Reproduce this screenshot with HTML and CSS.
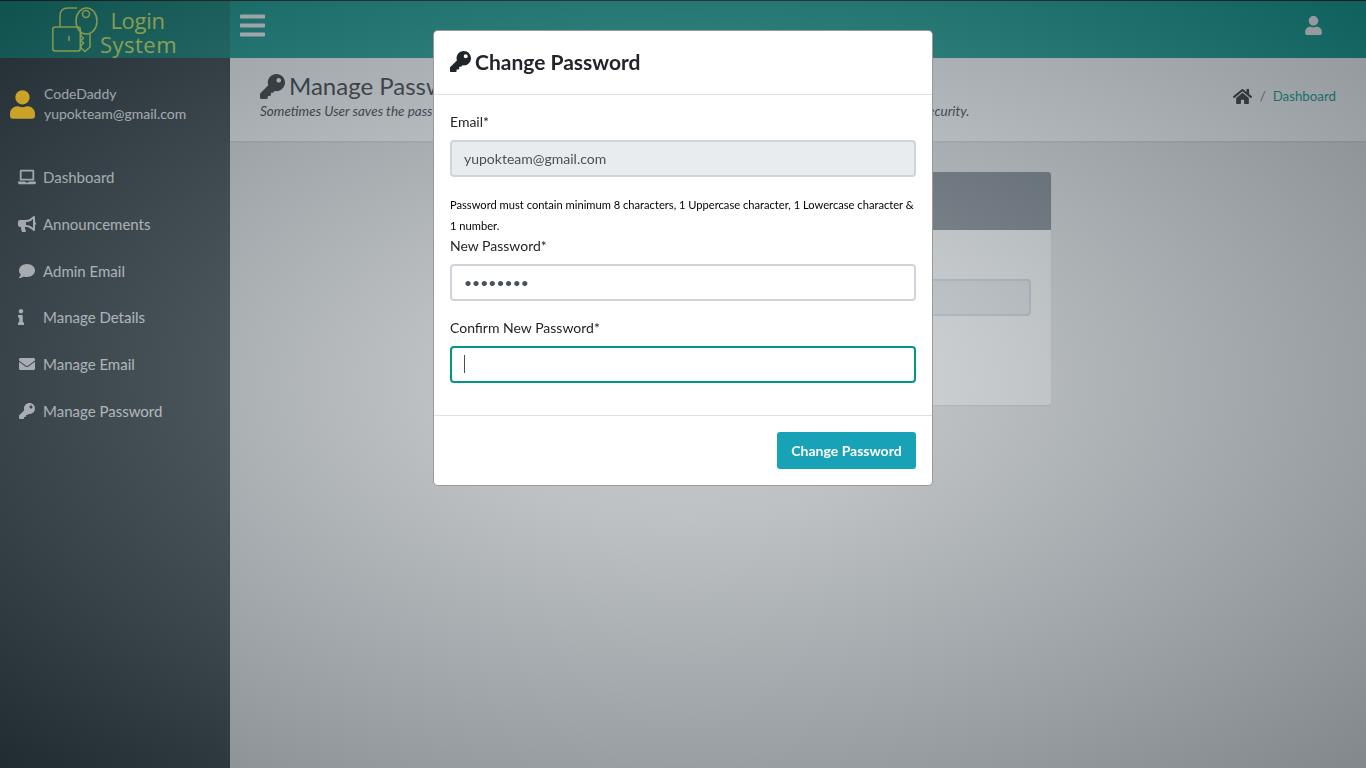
FILE: index.html
```html
<!DOCTYPE html>
<html lang="en">
<head>
<meta charset="utf-8">
<title>Change Password</title>
<link rel="stylesheet" href="styles.css">
</head>
<body>
<svg class="sprite" aria-hidden="true">
  <symbol id="i-key" viewBox="0 0 512 512"><path d="M512 176.001C512 273.203 433.202 352 336 352c-11.22 0-22.19-1.062-32.827-3.069l-24.012 27.014A23.999 23.999 0 0 1 261.223 384H224v40c0 13.255-10.745 24-24 24h-40v40c0 13.255-10.745 24-24 24H24c-13.255 0-24-10.745-24-24v-78.059c0-6.365 2.529-12.47 7.029-16.971l161.802-161.802C163.108 213.814 160 195.271 160 176 160 78.798 238.797.001 335.999 0 433.488-.001 512 78.511 512 176.001zM336 128c0 26.51 21.49 48 48 48s48-21.49 48-48-21.49-48-48-48-48 21.49-48 48z"/></symbol>
  <symbol id="i-user" viewBox="0 0 448 512"><path d="M224 256c70.7 0 128-57.3 128-128S294.7 0 224 0 96 57.3 96 128s57.3 128 128 128zm89.6 32h-16.7c-22.2 10.2-46.9 16-72.9 16s-50.6-5.8-72.9-16h-16.7C60.2 288 0 348.2 0 422.4V464c0 26.5 21.5 48 48 48h352c26.5 0 48-21.5 48-48v-41.6c0-74.2-60.2-134.4-134.4-134.4z"/></symbol>
  <symbol id="i-bars" viewBox="0 0 448 512"><path d="M16 132h416c8.837 0 16-7.163 16-16V76c0-8.837-7.163-16-16-16H16C7.163 60 0 67.163 0 76v40c0 8.837 7.163 16 16 16zm0 160h416c8.837 0 16-7.163 16-16v-40c0-8.837-7.163-16-16-16H16c-8.837 0-16 7.163-16 16v40c0 8.837 7.163 16 16 16zm0 160h416c8.837 0 16-7.163 16-16v-40c0-8.837-7.163-16-16-16H16c-8.837 0-16 7.163-16 16v40c0 8.837 7.163 16 16 16z"/></symbol>
  <symbol id="i-home" viewBox="0 0 576 512"><path d="M280.37 148.26L96 300.11V464a16 16 0 0 0 16 16l112.06-.29a16 16 0 0 0 15.92-16V368a16 16 0 0 1 16-16h64a16 16 0 0 1 16 16v95.64a16 16 0 0 0 16 16.05L464 480a16 16 0 0 0 16-16V300L295.67 148.26a12.19 12.19 0 0 0-15.3 0zM571.6 251.47L488 182.56V44.05a12 12 0 0 0-12-12h-56a12 12 0 0 0-12 12v72.61L318.47 43a48 48 0 0 0-61 0L4.34 251.47a12 12 0 0 0-1.6 16.9l25.5 31A12 12 0 0 0 45.15 301l235.22-193.74a12.19 12.19 0 0 1 15.3 0L530.9 301a12 12 0 0 0 16.9-1.6l25.5-31a12 12 0 0 0-1.7-16.93z"/></symbol>
  <symbol id="i-laptop" viewBox="0 0 640 512"><path d="M624 416H381.54c-.74 19.81-14.71 32-32.74 32H288c-18.69 0-33.02-17.47-32.77-32H16c-8.8 0-16 7.2-16 16v16c0 35.2 28.8 64 64 64h512c35.2 0 64-28.8 64-64v-16c0-8.8-7.2-16-16-16zM576 48c0-26.4-21.6-48-48-48H112C85.6 0 64 21.6 64 48v336h512V48zm-64 272H128V64h384v256z"/></symbol>
  <symbol id="i-bullhorn" viewBox="0 0 576 512"><path d="M576 240c0-23.63-12.95-44.04-32-55.12V32.01C544 23.26 537.02 0 512 0c-7.12 0-14.19 2.38-19.98 7.02l-85.03 68.03C364.28 109.19 310.66 128 256 128H64c-35.35 0-64 28.65-64 64v96c0 35.35 28.65 64 64 64h33.7c-1.39 10.48-2.18 21.14-2.18 32 0 39.77 9.26 77.35 25.56 110.94 5.19 10.69 16.52 17.06 28.4 17.06h74.28c26.05 0 41.69-29.84 25.9-50.56-16.4-21.52-26.15-48.36-26.15-77.44 0-11.11 1.62-21.79 4.41-32H256c54.66 0 108.28 18.81 150.98 52.95l85.03 68.03a32.023 32.023 0 0 0 19.98 7.02c24.92 0 32-22.78 32-32V295.13C563.05 284.04 576 263.63 576 240zm-96 141.42l-33.05-26.44C392.95 311.78 325.12 288 256 288v-96c69.12 0 136.95-23.78 190.95-66.98L480 98.58v282.84z"/></symbol>
  <symbol id="i-comment" viewBox="0 0 512 512"><path d="M256 32C114.6 32 0 125.1 0 240c0 49.6 21.4 95 57 130.7C44.5 421.1 2.7 466 2.2 466.5c-2.2 2.3-2.8 5.7-1.5 8.7S4.8 480 8 480c66.3 0 116-31.8 140.6-51.4 32.7 12.3 69 19.4 107.4 19.4 141.4 0 256-93.1 256-208S397.4 32 256 32z"/></symbol>
  <symbol id="i-info" viewBox="0 0 192 512"><path d="M20 424.229h20V279.771H20c-11.046 0-20-8.954-20-20V212c0-11.046 8.954-20 20-20h112c11.046 0 20 8.954 20 20v212.229h20c11.046 0 20 8.954 20 20V492c0 11.046-8.954 20-20 20H20c-11.046 0-20-8.954-20-20v-47.771c0-11.046 8.954-20 20-20zM96 0C56.235 0 24 32.235 24 72s32.235 72 72 72 72-32.235 72-72S135.764 0 96 0z"/></symbol>
  <symbol id="i-envelope" viewBox="0 0 512 512"><path d="M502.3 190.8c3.9-3.1 9.7-.2 9.7 4.7V400c0 26.5-21.5 48-48 48H48c-26.5 0-48-21.5-48-48V195.6c0-5 5.7-7.8 9.7-4.7 22.4 17.4 52.1 39.5 154.1 113.6 21.1 15.4 56.7 47.8 92.2 47.6 35.7.3 72-32.8 92.3-47.6 102-74.1 131.6-96.3 154-113.7zM256 320c23.2.4 56.6-29.2 73.4-41.4 132.7-96.3 142.8-104.7 173.4-128.7 5.8-4.5 9.2-11.5 9.2-18.9v-19c0-26.5-21.5-48-48-48H48C21.5 64 0 85.5 0 112v19c0 7.4 3.4 14.3 9.2 18.9 30.6 23.9 40.7 32.4 173.4 128.7 16.8 12.2 50.2 41.8 73.4 41.4z"/></symbol>
</svg>

<div class="app">
  <header class="topbar">
    <a class="brand" href="#">
      <svg class="brand-mark" viewBox="0 0 46 47" fill="none">
        <rect x="0.800" y="21" width="27.500" height="24" rx="2.500"/>
        <path d="M8 21V10C8 5 11 2 16 2H25"/>
        <ellipse cx="34.500" cy="15" rx="10.500" ry="13"/>
        <circle cx="34" cy="8" r="3.500"/>
        <path d="M29 27V30L31.500 32L29 34.500L31.500 37L29 39.500V42L33 45.500L38 41V27"/>
        <path d="M17 30V35"/>
      </svg>
      <span class="brand-text"><span class="brand-login">Login</span><span class="brand-system">System</span></span>
    </a>
    <div class="topbar-main">
      <svg class="bars"><use href="#i-bars"/></svg>
      <svg class="top-user"><use href="#i-user"/></svg>
    </div>
  </header>
  <div class="below">
    <aside class="sidebar">
      <div class="profile">
        <svg class="profile-icon"><use href="#i-user"/></svg>
        <div class="profile-text"><p>CodeDaddy</p><p>yupokteam@gmail.com</p></div>
      </div>
      <ul class="menu">
        <li><svg class="menu-icon"><use href="#i-laptop"/></svg>Dashboard</li>
        <li><svg class="menu-icon"><use href="#i-bullhorn"/></svg>Announcements</li>
        <li><svg class="menu-icon"><use href="#i-comment"/></svg>Admin Email</li>
        <li><svg class="menu-icon menu-icon-info"><use href="#i-info"/></svg>Manage Details</li>
        <li><svg class="menu-icon"><use href="#i-envelope"/></svg>Manage Email</li>
        <li><svg class="menu-icon"><use href="#i-key"/></svg>Manage Password</li>
      </ul>
    </aside>
    <main class="content">
      <section class="title-bar">
        <div>
          <h1 class="page-title"><svg class="page-key"><use href="#i-key"/></svg>Manage Password</h1>
          <p class="page-sub">Sometimes User saves the password in the browser or forgets it, so keep on changing your password regularly for better security.</p>
        </div>
        <div class="crumbs">
          <svg class="crumb-home"><use href="#i-home"/></svg>
          <span class="crumb-sep">/</span>
          <a class="crumb-link" href="#">Dashboard</a>
        </div>
      </section>
      <section class="card">
        <div class="card-head">Change Password</div>
        <div class="card-body">
          <div class="card-input"></div>
        </div>
      </section>
    </main>
  </div>
</div>

<div class="overlay">
  <div class="modal">
    <div class="modal-head">
      <svg class="modal-key"><use href="#i-key"/></svg>
      <h4 class="modal-title">Change Password</h4>
    </div>
    <form class="modal-body">
      <div class="field">
        <label class="label" for="email">Email*</label>
        <input class="input input-disabled" id="email" type="text" value="yupokteam@gmail.com" readonly>
      </div>
      <p class="hint">Password must contain minimum 8 characters, 1 Uppercase character, 1 Lowercase character &amp; 1 number.</p>
      <div class="field">
        <label class="label" for="newp">New Password*</label>
        <input class="input" id="newp" type="password" value="12345678">
      </div>
      <div class="field field-last">
        <label class="label" for="conf">Confirm New Password*</label>
        <div class="focus-wrap">
          <input class="input input-focus" id="conf" type="password">
          <span class="caret"></span>
        </div>
      </div>
    </form>
    <div class="modal-foot">
      <button class="btn" type="button">Change Password</button>
    </div>
  </div>
</div>
</body>
</html>
```

FILE: styles.css
```css
* { box-sizing: border-box; }
html, body { margin: 0; height: 100%; overflow: hidden; }
body {
  font-family: Lato, "Liberation Sans", sans-serif;
  font-size: 14px;
  color: #212529;
  background: #e5e5e5;
}
.sprite { display: none; }
svg { fill: currentColor; display: block; flex: none; }
p, h1, h4, ul { margin: 0; padding: 0; }
a { text-decoration: none; color: inherit; }

.app { height: 768px; display: flex; flex-direction: column; }

.topbar {
  height: 58px;
  flex: none;
  display: flex;
  background: #009688;
  border-top: 1px solid #0a0f0f;
}
.brand {
  width: 230px;
  flex: none;
  background: #00796b;
  display: flex;
  align-items: center;
  justify-content: center;
  gap: 2px;
  padding-right: 1px;
  color: #dcf860;
}
.brand-mark {
  width: 46px;
  height: 47px;
  stroke: currentColor;
  stroke-width: 1.5;
  fill: none;
}
.brand-text {
  display: flex;
  flex-direction: column;
  align-items: center;
  padding-top: 4px;
  font-size: 22px;
  line-height: 24px;
  font-family: "Open Sans", Lato, sans-serif;
  font-weight: 400;
}
.brand-login { margin-left: -2px; letter-spacing: -.3px; }
.brand-system { letter-spacing: .5px; }
.topbar-main {
  flex: 1;
  display: flex;
  align-items: center;
  justify-content: space-between;
  padding: 0 44px 0 10px;
  color: #fff;
}
.bars { width: 25px; height: 29px; margin-top: -8px; }
.top-user { width: 17px; height: 19px; margin-top: -8px; }

.below { flex: 1; display: flex; min-height: 0; }

.sidebar {
  width: 230px;
  flex: none;
  background: #222d32;
  color: #fff;
}
.profile {
  display: flex;
  align-items: center;
  gap: 9px;
  padding: 26px 10px 0;
}
.profile-icon {
  width: 25px;
  height: 29px;
  color: #c9a227;
  position: relative;
  z-index: 1;
}
.profile-text { font-size: 14px; line-height: 20px; }
.menu { list-style: none; margin-top: 29.6px; }
.menu li {
  display: flex;
  align-items: center;
  height: 46.8px;
  padding-left: 18px;
  font-size: 15px;
}
.menu-icon { width: 18px; height: 16px; margin-right: 7px; }
.menu-icon-info { width: 6px; margin-right: 19px; }

.content { flex: 1; display: flex; flex-direction: column; min-width: 0; }
.title-bar {
  height: 83px;
  flex: none;
  background: #fff;
  display: flex;
  justify-content: space-between;
  align-items: flex-start;
  padding: 13px 30px 0;
  box-shadow: 0 1px 2px rgba(0, 0, 0, .1);
}
.page-title {
  display: flex;
  align-items: center;
  gap: 4px;
  font-size: 24px;
  font-weight: 400;
  line-height: 30px;
  color: #212529;
}
.page-key { width: 25px; height: 25px; }
.page-sub {
  font-size: 13.5px;
  font-style: italic;
  line-height: 20px;
  white-space: nowrap;
}
.crumbs {
  display: flex;
  align-items: center;
  height: 20px;
  margin-top: 15px;
  font-size: 13.3px;
}
.crumb-home { width: 19px; height: 17px; color: #212529; }
.crumb-sep { margin: 0 7px 0 8px; color: #6c757d; }
.crumb-link { color: #009688; }

.card {
  width: 506px;
  margin: 31px 0 0 315px;
  height: 233px;
  background: #fff;
  border-radius: 3px;
  box-shadow: 0 1px 2px rgba(0, 0, 0, .1);
}
.card-head {
  height: 58px;
  background: #6c757d;
  color: #fff;
  border-radius: 3px 3px 0 0;
  padding: 18px 20px;
}
.card-body { padding: 49px 20px 0; }
.card-input {
  height: 37px;
  background: #e9ecef;
  border: 2px solid #ced4da;
  border-radius: 4px;
}

.overlay {
  position: fixed;
  inset: 0;
  display: flex;
  justify-content: center;
  align-items: flex-start;
  padding-top: 30px;
  background: radial-gradient(ellipse at 50% 50%, rgba(170, 176, 182, .5) 0, rgba(150, 158, 164, .5) 25%, rgba(76, 88, 96, .5) 71%, rgba(31, 43, 49, .5) 100%);
}
.modal {
  width: 500px;
  background: #fff;
  border: 1px solid rgba(0, 0, 0, .4);
  border-radius: 5px;
}
.modal-head {
  display: flex;
  align-items: center;
  gap: 4px;
  height: 64px;
  padding: 0 16px 2px;
  border-bottom: 1px solid #dee2e6;
  color: #212529;
}
.modal-key { width: 21px; height: 21px; }
.modal-title { font-size: 21px; font-weight: 700; line-height: 31px; }
.modal-body { padding: 16px 16px 32px; height: 320px; }
.field { margin-bottom: 16px; }
.field-last { margin-bottom: 0; }
.label {
  display: block;
  font-size: 14px;
  line-height: 21px;
  margin-bottom: 8px;
}
.input {
  display: block;
  width: 100%;
  height: 37px;
  padding: 0 12px;
  font-family: inherit;
  font-size: 14px;
  color: #495057;
  background: #fff;
  border: 2px solid #ced4da;
  border-radius: 4px;
  outline: none;
}
.input-disabled { background: #e9ecef; }
.input-focus { border-color: #009688; caret-color: transparent; }
.focus-wrap { position: relative; }
.caret {
  position: absolute;
  left: 14px;
  top: 9px;
  width: 1px;
  height: 18px;
  background: #495057;
}
.hint {
  font-size: 11.15px;
  line-height: 21px;
  color: #000;
  padding-top: 1px;
  height: 42px;
}
.modal-foot {
  display: flex;
  justify-content: flex-end;
  height: 70px;
  padding: 16px;
  border-top: 1px solid #dee2e6;
}
.btn {
  height: 37px;
  width: 139px;
  padding: 0;
  font-family: inherit;
  font-size: 14px;
  font-weight: 700;
  color: #fff;
  background: #17a2b8;
  border: 0;
  border-radius: 3px;
}
```
